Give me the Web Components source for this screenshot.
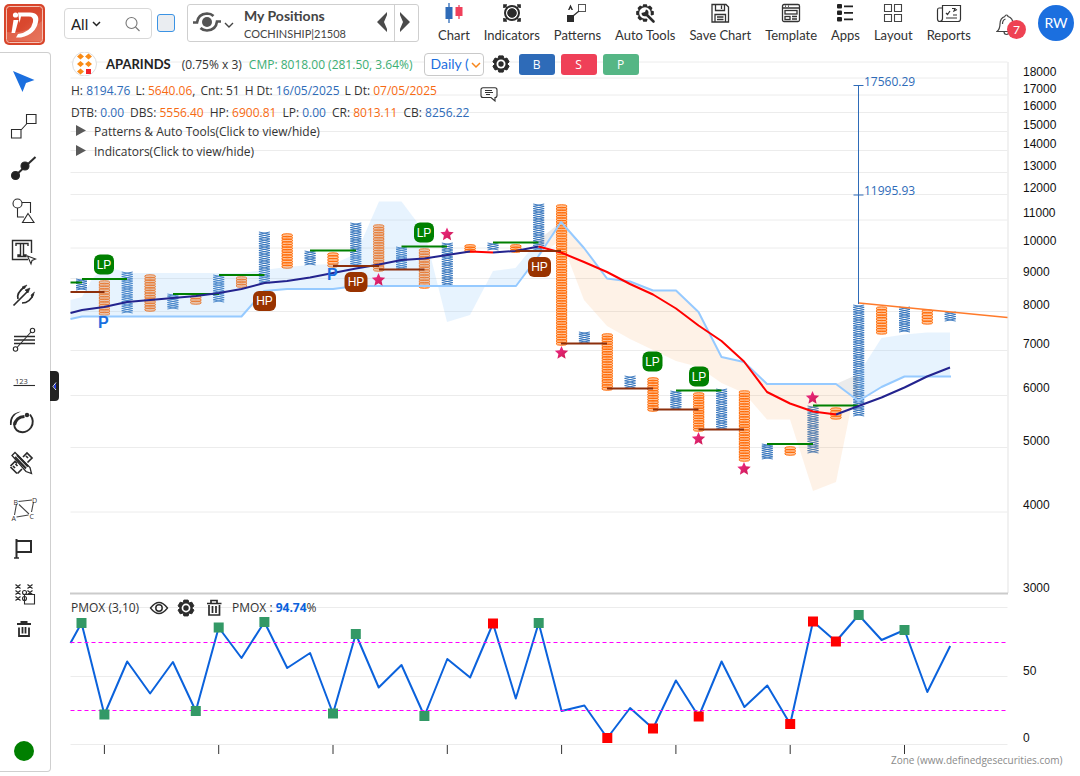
<!DOCTYPE html>
<html lang="en">
<head>
<meta charset="utf-8">
<title>APARINDS - Point &amp; Figure</title>
<style>
body{margin:0;background:#fff;color:#333;font-family:Lato,"Open Sans",sans-serif;font-size:13px}
</style>
</head>
<body>
<app-shell></app-shell>
<script>
function define(name, html){
  const t=document.createElement('template');
  t.innerHTML=html;
  customElements.define(name, class extends HTMLElement{
    constructor(){super();this.attachShadow({mode:'open'}).append(t.content.cloneNode(true));}
  });
}
/* toothed wheel centred on 0,0 */
function gear(n,ro,ri){
  let p=[];
  for(let k=0;k<n;k++){
    const a=k*2*Math.PI/n, w=Math.PI/n;
    [[-.95,ri],[-.5,ro],[.5,ro],[.95,ri]].forEach(([f,r])=>p.push((r*Math.sin(a+f*w)).toFixed(2)+','+(-r*Math.cos(a+f*w)).toFixed(2)));
  }
  return p.join(' ');
}
const settings=`<svg width="18" height="18" viewBox="-9 -9 18 18"><polygon points="${gear(6,8.4,6.2)}" fill="#2b2b2b" stroke="#2b2b2b" stroke-linejoin="round"/><circle r="4.500" fill="#fff"/><circle r="2.700" fill="#2b2b2b"/></svg>`;

define('menu-item',`
<style>
:host{display:block}
button{all:unset;display:flex;flex-direction:column;align-items:center;gap:2px;cursor:pointer;font-size:13px;line-height:18px;color:#333;white-space:nowrap}
</style>
<button><slot name="icon"></slot><slot></slot></button>`);

define('top-bar',`
<style>
:host{display:flex;align-items:flex-start;height:52px;box-sizing:border-box;padding:4px 6px 0 4px}
svg{display:block}
.logo{margin-right:19px}
.search{display:flex;align-items:center;box-sizing:border-box;width:88px;height:31px;margin-top:4px;border:1px solid #d8d8d8;border-radius:4px;position:relative}
select{appearance:none;border:0;background:none;font:15px/20px Lato,sans-serif;color:#222;padding:0 0 0 6px;width:38px}
.search input{all:unset;width:12px;height:20px}
.search .chev{position:absolute;left:27px;top:11px}
.tick{appearance:none;width:18px;height:18px;margin:10px 12px 0 5px;border:1px solid #3b93e4;border-radius:3px;background:#eaedf1}
.pos{display:flex;box-sizing:border-box;width:232px;height:38px;border:1px solid #cfcfcf;border-radius:3px;margin-right:19px}
.pick{display:flex;align-items:center;width:56px;box-sizing:border-box;padding:0 0 2px 5px}
.name{flex:1;white-space:nowrap}
.name b{display:block;font-size:14px;line-height:18px;margin-top:2px;color:#444}
.name span{display:block;font-size:11px;line-height:17px;color:#444}
.step{all:unset;width:25px;display:flex;align-items:center;justify-content:center;cursor:pointer;margin-bottom:2px}
.step+.step{border-left:1px solid #cfcfcf;margin-bottom:0;padding-bottom:2px;width:24px;box-sizing:border-box;justify-content:flex-start;padding-left:4px}
nav{flex:1;display:flex;justify-content:space-between;margin-top:-4px}
nav svg{height:24px;width:26px}
.bell{all:unset;position:relative;margin:4px 12px 0 25px;width:30px;height:32px}
.bell i{position:absolute;right:0;top:12px;width:19px;height:19px;border-radius:50%;background:#ee4253;color:#fff;font:12px/19px Lato,sans-serif;text-align:center}
.me{all:unset;width:36px;height:36px;border-radius:50%;background:#1b6fdf;color:#fff;font-size:14px;line-height:36px;text-align:center;margin-top:1px}
</style>
<svg class="logo" width="41" height="41" viewBox="0 0 41 41" role="img" aria-label="Definedge">
 <defs><linearGradient id="lg" x1="0" y1="0" x2="1" y2="1"><stop offset="0" stop-color="#d94428"/><stop offset=".5" stop-color="#d9482f"/><stop offset="1" stop-color="#e4694f"/></linearGradient></defs>
 <rect width="41" height="41" rx="5" fill="#d8452b"/><rect x="2.5" y="2.5" width="36" height="36" rx="3" fill="url(#lg)" stroke="#f3c1b4"/>
 <path d="M3 28Q24 30 38 17V37H3Z" fill="#ec8872" opacity=".45"/>
 <circle cx="11.5" cy="11" r="2.6" fill="#fff"/><path d="M9.5 16H14.5L11 29H7.500Z" fill="#fff"/>
 <path d="M14 8.500H26Q36 9 34 18Q32 30 17 33.500H12L14 30Q27 28 29 18Q30 12 24 12.500H17L15.500 19Z" fill="#fff"/>
</svg>
<div class="search"><select aria-label="Segment"><option>All</option></select><input aria-label="Search symbol">
 <svg class="chev" width="9" height="8" viewBox="0 0 9 8"><path d="M1 2l3.500 3.500L8 2" fill="none" stroke="#222" stroke-width="1.500"/></svg>
 <svg width="16" height="16" viewBox="0 0 16 16" style="margin-left:10px"><circle cx="6.500" cy="7" r="5.500" fill="none" stroke="#777" stroke-width="1.100"/><path d="M10.500 11l4 4" stroke="#777" stroke-width="1.100"/></svg>
</div>
<input class="tick" type="checkbox" aria-label="Compare">
<div class="pos">
 <div class="pick">
  <svg width="28" height="24" viewBox="0 0 28 24" fill="none" stroke="#555"><circle cx="14" cy="12" r="5" fill="#555" stroke="none"/><path d="M0 12.500H4Q5 4 14 3.500Q18 3.500 20.500 6M28 11.500H24Q23 20 14 20.500Q10 20.500 7.500 18" stroke-width="2.600"/></svg>
  <svg width="10" height="8" viewBox="0 0 10 8" style="margin:6px 0 0 3px"><path d="M1 2l4 4 4-4" fill="none" stroke="#444" stroke-width="1.400"/></svg>
 </div>
 <div class="name"><b>My Positions</b><span>COCHINSHIP|21508</span></div>
 <button class="step" aria-label="Previous"><svg width="12" height="20" viewBox="0 0 12 20"><path d="M11 0L1 10L11 20V17L8 10L11 3Z" fill="#4a4a4a"/></svg></button>
 <button class="step" aria-label="Next"><svg width="12" height="20" viewBox="0 0 12 20"><path d="M1 0L11 10L1 20V17L4 10L1 3Z" fill="#4a4a4a"/></svg></button>
</div>
<nav>
 <menu-item><svg slot="icon" viewBox="0 0 26 24"><path d="M8 3V23" stroke="#2e6bb8" stroke-width="1.300"/><rect x="4.500" y="7" width="7" height="12" fill="#2e6bb8"/><path d="M18 5V19" stroke="#f0405b" stroke-width="1.300"/><rect x="14.500" y="7" width="7" height="9" fill="#f0405b"/></svg>Chart</menu-item>
 <menu-item><svg slot="icon" viewBox="0 -1 26 24" fill="none" stroke="#2b2b2b"><circle cx="13" cy="12" r="7" stroke-width="2"/><circle cx="13" cy="12" r="4.300" fill="#2b2b2b"/><path d="M5 7V4H8M18 4H21V7M5 17V20H8M18 20H21V17M5 4l3 3M21 4l-3 3M5 20l3-3M21 20l-3-3" stroke-width="1.700"/></svg>Indicators</menu-item>
 <menu-item><svg slot="icon" viewBox="0 -1 26 24"><path d="M4 9L6.500 3.500L9 9H7.500L6.500 7L5.500 9Z" fill="#2b2b2b"/><rect x="3" y="14" width="7" height="7" fill="#2b2b2b"/><rect x="14.500" y="3.500" width="7" height="7" fill="none" stroke="#555"/><path d="M9 15l6-5" stroke="#2b2b2b" stroke-width="1.200"/></svg>Patterns</menu-item>
 <menu-item><svg slot="icon" viewBox="-13 -13 26 24"><polygon points="${gear(8,9,7)}" fill="#2b2b2b"/><circle r="5.800" fill="#fff"/><path d="M1 1L8 8" stroke="#fff" stroke-width="5.500"/><path d="M1 1L8.500 8.500" stroke="#2b2b2b" stroke-width="2.600" stroke-linecap="round"/><path d="M-3.500 0A3.500 3.500 0 1 0 1-3.500L0-1Z" fill="#2b2b2b"/></svg>Auto Tools</menu-item>
 <menu-item><svg slot="icon" viewBox="0 -1 26 24" fill="none" stroke="#333" stroke-width="1.300"><path d="M5 3.500H19L21.500 6V21H5ZM8.500 3.500V9.500H17.500V3.500M14.500 4.500V8M8 21V13.500H18.500V21M10 16H16.500M10 18.500H16.500"/></svg>Save Chart</menu-item>
 <menu-item><svg slot="icon" viewBox="0 -1 26 24" fill="none" stroke="#333" stroke-width="1.300"><rect x="4.500" y="3.500" width="17" height="17" rx="1.500"/><path d="M4.500 7H21.500M7 5.200H8M10 5.200H11"/><rect x="7" y="9.500" width="12" height="3.500"/><rect x="7" y="15.500" width="5" height="3"/><path d="M14 15.500H19M14 18H19"/></svg>Template</menu-item>
 <menu-item><svg slot="icon" viewBox="0 -1 26 24" fill="#222"><rect x="5" y="3" width="5" height="4.500" rx="1"/><rect x="5" y="9.500" width="5" height="4.500" rx="1"/><rect x="5" y="16" width="5" height="4.500" rx="1"/><path d="M12 5.300H21M12 11.800H21M12 18.300H21" stroke="#222" stroke-width="1.800"/></svg>Apps</menu-item>
 <menu-item><svg slot="icon" viewBox="0 -1 26 24" fill="none" stroke="#444" stroke-width="1.100"><path d="M4.500 3.500H11.500V10.500H4.500ZM14.500 3.500H21.500V10.500H14.500ZM4.500 13.500H11.500V20.500H4.500ZM14.500 13.500H21.500V20.500H14.500Z"/></svg>Layout</menu-item>
 <menu-item><svg slot="icon" viewBox="0 -1 26 24" fill="none" stroke="#333" stroke-width="1.200"><path d="M6 7H3Q1.500 7 1.500 9V18Q1.500 20.500 4 20.500H22Q24.500 20.500 24.500 18V4.500H6.500V17.500Q6.500 20 4 20.500"/><path d="M10 12l1.500 1.500L14 10M10 17H21M17 14H21M16 7.500H19L18 10L21 8.500"/></svg>Reports</menu-item>
</nav>
<button class="bell" aria-label="Notifications"><svg width="22" height="24" viewBox="0 0 22 24" fill="none" stroke="#444" stroke-width="1.200"><path d="M9 4.500A1.500 1.500 0 0 1 12 4.500Q17 6 17 12Q17 17 20 19.500H1Q4 17 4 12Q4 6 9 4.500M8 19.500Q8 22.500 10.500 22.500T13 19.500M6.500 12Q6.500 8 9.500 7"/></svg><i>7</i></button>
<button class="me">RW</button>`);

/* Artwork of the drawing tools; the strip is 42 units per tool, starting at y=63 */
const tools=[
['Cursor','<path d="M13 71L34.500 80L26 83L22.500 92Z" fill="#1b6fdf" stroke="none"/>'],
['Line','<path d="M11.500 129.500H21V138H11.500ZM26.500 114.500H36V123.500H26.500ZM21 130L27 123.500"/>'],
['Trend','<path d="M15 176L35.500 157" stroke-width="2"/><circle cx="15.500" cy="175.500" r="4" fill="#222"/><circle cx="25" cy="166" r="4" fill="#222"/>'],
['Shapes','<path d="M22 202.500H30.500V213M17.500 208V217H24M28 213.500L34 222.500H22.500Z"/><circle cx="17.500" cy="203.500" r="4.500"/>'],
['Text','<path d="M31.500 253V240.500H12.500V259.500H28M16 246V243.500H28V246M20.500 244V255H18V256.500H26V255H23.500V244" stroke-width="1.400"/><path d="M27.500 256L35.500 259L32 260.500L31 264Z"/>'],
['Pitchfork','<path d="M13.500 305.500L28 291M18 299Q16 293 25 286.500M22 303Q30 303 33.500 294" stroke-width="1.700"/><path d="M22 287L27 285L24 289ZM25 290L30 288L28 293ZM31 295L34.500 292L32 298Z" fill="#2b2b2b" stroke-width=".6"/>'],
['Fibonacci','<path d="M14 336.500H35M14 340H35M14 343.500H35" stroke-width="1.300"/><path d="M17 347.500L31 332"/><circle cx="32.500" cy="330.500" r="2.200" fill="#fff"/><circle cx="15.500" cy="349" r="2.200" fill="#fff"/>'],
['Count','<path d="M13.500 385.500H35"/><text x="15" y="384" font-size="7.500">123</text>'],
['Cycle','<path d="M10 425Q9 413 21 411.500Q11 415 11.500 425Z" fill="#2b2b2b" stroke="none"/><path d="M30 414.500Q35 421 31 427.500Q26 434 19 431.500Q13 429 14.500 422" stroke-width="1.900"/><path d="M14.500 425Q16 417 24.500 416.500" stroke-width="3"/><circle cx="27" cy="415" r="2.200" fill="#2b2b2b" stroke="none"/>'],
['Measure','<path d="M10.500 466L15 461.500L17 463.500M23 457L27 453L32 458L27.500 462.500M17.500 473.500L22 469M10.500 467L17 473.500M13 466l2 2M15.500 464l2 2M26 456l2 2" stroke-width="1.700"/><path d="M12 455.500L15 452.500L30 467.500L31.500 473.500L26 471.500Z" stroke-width="1.300"/><path d="M17 455L28 466.500M15 457L26 468.500" stroke-width="2"/>'],
['Harmonic','<path d="M18.500 501.500L32 500M16.500 504L14.500 515M16.500 517L28.500 515M19 504.500L29 514M33.500 502L31.500 512" stroke="#444"/><g font-size="7"><text x="13.500" y="505">B</text><text x="32" y="503">D</text><text x="11.500" y="521">A</text><text x="29.500" y="518.500">C</text></g>'],
['Flag','<path d="M16.500 539V558M16.500 541H31V552H16.500" stroke-width="2"/><path d="M14 558H19" stroke-width="1.500"/>'],
['Pattern','<path d="M15.500 584.500l5 4m0-4l-5 4M27.500 584.500l5 4m0-4l-5 4M15.500 590.500l5 4m0-4l-5 4M27.500 590.500l5 4m0-4l-5 4M15.500 596.500l5 4m0-4l-5 4" stroke-width="1.200"/><circle cx="24.500" cy="592.500" r="2"/><circle cx="24.500" cy="598.500" r="2"/><path d="M24.500 594.500H34.500V604H24.500Z"/>'],
['Delete','<path d="M17 624H31M21.500 623.500V622H26.500V623.500" stroke-width="2"/><path d="M19 627.500V636H29V627.500M22.500 627V633.500M25.500 627V633.500" stroke-width="1.800"/>']
];
define('tool-strip',`
<style>
:host{display:flex;flex-direction:column;position:relative;box-sizing:border-box;border:1px solid #cfcfcf;border-left:0;border-radius:0 4px 4px 0;padding:10px 0;margin-bottom:4px}
button{all:unset;display:block;height:42px;cursor:pointer}
svg{display:block;width:50px;height:42px}
.live{width:20px;height:20px;border-radius:50%;background:#007f00;margin:auto 0 0 14px}
.grip{position:absolute;left:100%;top:318px;width:9px;height:30px;border-radius:0 4px 4px 0;background:#222}
.grip svg{width:9px;height:30px}
</style>
${tools.map(([n,a],i)=>`<button aria-label="${n}"><svg viewBox="0 ${63+42*i} 50 42" fill="none" stroke="#2b2b2b" stroke-width="1.100">${a.replace(/<text/g,'<text stroke="none" fill="#333" font-family="Open Sans,sans-serif"')}</svg></button>`).join('')}
<div class="live"></div>
<button class="grip" aria-label="Collapse"><svg viewBox="0 0 9 30"><path d="M6 11.500L3 15.500L6 19" fill="none" stroke="#dfe4ff"/><path d="M6 12.500L4 15.500L6 18Z" fill="#2038ff"/></svg></button>`);

define('chart-info',`
<style>
:host{display:block;padding:0 0 0 20px;white-space:nowrap;color:#333;font-family:"Open Sans",sans-serif;font-size:12px}
svg{display:block}
.row{display:flex;align-items:center;height:24px}
.r2{height:28px;gap:5px}
.r3{height:16px;gap:6px;margin-bottom:1px}
.sym{font-family:Lato,sans-serif;font-size:13px;margin:0 11px 0 9px;color:#222}
.cmp{color:#3cae74;margin-left:7px}
label{position:relative;margin:0 8px 0 11px}
label svg{position:absolute;right:3px;top:8px}
select{appearance:none;display:block;box-sizing:border-box;width:60px;height:23px;border:1px solid #c9c9c9;border-radius:4px;background:#fff;color:#1b6fdf;font:14px/20px Lato,sans-serif;padding:0 0 0 6px}
.t{all:unset;width:36px;height:21px;border-radius:3px;text-align:center;color:#fff;font:12px/21px "Open Sans",sans-serif;margin-left:6px;cursor:pointer}
.b{background:#2e6bb8;margin-left:9px}.s{background:#ef4058}.p{background:#55b685}
.b1{color:#2e6bb8}.o{color:#f76a12}
summary{list-style:none;display:flex;align-items:center;gap:8px;height:20px;padding-left:4px;cursor:pointer}
.note{all:unset;margin:8px 0 0 38px}
</style>
<div class="row">
 <svg width="26" height="24" viewBox="0 0 26 24"><circle cx="13.500" cy="12" r="12" fill="#fff" stroke="#ddd"/><path d="M9.500 1.500l3.500 3-3.500 3-3.500-3ZM17.500 1.500l3.500 3-3.500 3-3.500-3ZM9.500 9l3.500 3-3.500 3-3.500-3ZM17.500 9l3.500 3-3.500 3-3.500-3ZM9.500 16.500l3.500 3-3.500 3-3.500-3Z" fill="#f98b16"/><rect x="15" y="17" width="5" height="5" fill="#f3222b"/></svg>
 <b class="sym">APARINDS</b><span>(0.75% x 3)</span><span class="cmp">CMP: 8018.00 (281.50, 3.64%)</span>
 <label><select aria-label="Interval"><option>Daily (</option></select><svg width="10" height="8" viewBox="0 0 10 8"><path d="M1 2l4 4 4-4" fill="none" stroke="#f7861b" stroke-width="1.500"/></svg></label>
 ${settings}
 <button class="t b">B</button><button class="t s">S</button><button class="t p">P</button>
</div>
<div class="row r2">
 <span>H: <span class="b1">8194.76</span></span><span>L: <span class="o">5640.06</span>,</span><span>Cnt: 51</span><span>H Dt: <span class="b1">16/05/2025</span></span><span>L Dt: <span class="o">07/05/2025</span></span>
 <button class="note" aria-label="Notes"><svg width="18" height="15" viewBox="0 0 18 15" fill="none" stroke="#333" stroke-width="1.100"><path d="M3 .800H15Q17 .800 17 3V8.500Q17 10.500 15 10.500V14L11 10.500H3Q1 10.500 1 8.500V3Q1 .800 3 .800ZM5 3.500H12M5 5.500H13M6 7.500H10"/></svg></button>
</div>
<div class="row r3">
 <span>DTB: <span class="b1">0.00</span></span><span>DBS: <span class="o">5556.40</span></span><span>HP: <span class="o">6900.81</span></span><span>LP: <span class="b1">0.00</span></span><span>CR: <span class="o">8013.11</span></span><span>CB: <span class="b1">8256.22</span></span>
</div>
<details><summary><svg width="11" height="12" viewBox="0 0 11 12"><path d="M1 0L11 5.500L1 11Z" fill="#5a5a5a"/></svg>Patterns &amp; Auto Tools(Click to view/hide)</summary></details>
<details><summary><svg width="11" height="12" viewBox="0 0 11 12"><path d="M1 0L11 5.500L1 11Z" fill="#5a5a5a"/></svg>Indicators(Click to view/hide)</summary></details>`);

/* ---- price pane and oscillator ---- */
const X=i=>+(81.5+22.86*i).toFixed(1);
const cols=[[279,290],[281,315],[272,313],[275,311],[294,309],[296,304],[275,302],[277,287],[232,283],[234,268],[251,265],[253,267],[223,266],[225,271],[247,269],[249,288],[243,285],[245,252],[243,250],[245,252],[204,250],[205,345],[332,343],[334,390],[376,388],[378,411],[391,409],[393,431],[389,429],[391,461],[444,459],[447,455],[406,453],[408,419],[305,416],[307,334],[307,332],[310,324],[312,321]];
function column([a,b],i){
  const x=X(i), o=i%2, n=Math.max(2,Math.round((b-a)/(o?2.6:2.3))), h=(b-a)/n;
  let d='';
  for(let k=0;k<n;k++){
    const t=(a+k*h).toFixed(1), m=h.toFixed(1);
    d+= o ? `M${x-5.5} ${(a+(k+.5)*h).toFixed(1)}a5.5 1.6 0 1 1 11 0a5.5 1.6 0 1 1 -11 0` : `M${x-5.5} ${t}l11 ${m}m0 -${m}l-11 ${m}`;
  }
  return (o?`<rect x="${x-5.5}" y="${a}" width="11" height="${b-a}" rx="2" fill="#ffc49a"/>`:'')+`<path d="${d}" stroke="${o?'#ff6c08':'#2e6fba'}" stroke-width="${o?1:.9}"/>`;
}
const seg=(list,c)=>`<path d="${list.map(([a,b,y])=>`M${a} ${y}H${b}`).join('')}" stroke="${c}" stroke-width="2"/>`;
const line=(s,c,w=2)=>`<polyline points="${s}" stroke="${c}" stroke-width="${w}" stroke-linejoin="round"/>`;
const badge=([t,x,y])=>{const w=t=='LP'?20:23;return `<rect x="${x-w/2}" y="${y-10}" width="${w}" height="20" rx="6" fill="${t=='LP'?'#008000':'#993300'}"/><text x="${x}" y="${y+4}" text-anchor="middle" fill="#fff" font-family="Liberation Sans,sans-serif" font-size="12">${t}</text>`;};
const star=([x,y])=>{let p=[];for(let k=0;k<10;k++){const r=k%2?3.3:7,a=k*Math.PI/5;p.push((x+r*Math.sin(a)).toFixed(1)+','+(y-r*Math.cos(a)).toFixed(1));}return `<polygon points="${p.join(' ')}" fill="url(#st)"/>`;};
const osc=[623,714.5,661.5,693.5,662,711,627.5,658,622,668,653,713.5,634,687.5,665,716,659,677.5,623.5,698.5,623,711,705.5,738,708,728.5,680.5,716.5,661.5,707,685.5,724,621.5,641.5,615,640,630,692,646];
const mark=(l,c)=>l.map(i=>`<rect x="${(X(i)-5).toFixed(1)}" y="${osc[i]-5}" width="10" height="10" fill="${c}"/>`).join('');
const scale=[[18000,72],[17000,89],[16000,106],[15000,125],[14000,144],[13000,166],[12000,188],[11000,213],[10000,241],[9000,272],[8000,305],[7000,344],[6000,388],[5000,441],[4000,505],[3000,588],[50,671],[0,738]];

define('price-chart',`
<style>
:host{display:block}
svg{display:block;width:100%;height:auto}
</style>
<svg viewBox="51 52 1029 724" fill="none" role="img" aria-label="APARINDS point and figure chart with PMOX">
<defs><linearGradient id="st" x1="0" y1="0" x2="1" y2="1"><stop offset="0" stop-color="#f52c8c"/><stop offset="1" stop-color="#c8194f"/></linearGradient></defs>
<g stroke="#ececec">${[62,78,95,112.5,131.5,150.5,172.5,194.5,220,248,278.5,311.5,350.5,395.5,447.5,512,607.5,676.5,744.5].map(y=>`<path d="M70.500 ${y}H1007.500"/>`).join('')}<path d="M1008 62V593" stroke-width="1.500"/></g>
<path d="M70 593.500H1008" stroke="#cbcbcb" stroke-width="2"/>
${cols.map(column).join('')}
<path fill="#8cc6fa" fill-opacity=".21" d="M70.500 300L82 297L92 279L104 268L119 270L127 273H241.500L264 270L287 267L310 265L333 264L356 254L379 201.500H401.500L424.500 232L447 322L470 315L493 271L515.500 268L538.500 240L538.500 256L515.500 286H356L333 289H287L264 291L241.500 316.500H82L70.500 319Z"/>
<path fill="#999" fill-opacity=".2" d="M538.500 240L561 222L538.500 256ZM836 384L858.500 374V401Z"/>
<path fill="#fba860" fill-opacity=".15" d="M538.500 256L561 222L584 248L607 278.500L630 281.500L653 290.500H676L698.500 312L721.500 357L744 362L767 384H836L853 398L836 482L813 491L790 419.500H767L744 393L721.500 383L698.500 367L676 361L653 350L630 339L607 326L584 300L561 240Z"/>
<path fill="#8cc6fa" fill-opacity=".21" d="M858.500 374L881.500 338L904.500 334.500L927 332.500H950V376.500H904.500L881.500 387L858.500 401Z"/>
${line('70.500,319 82,316.500 241.500,316.500 264,291 287,289 333,289 356,286 516,286 538.500,256 561,222 584,248 607,278.500 630,281.500 653,290.500 676,290.500 698.500,312 721.500,357 744,362 767,384 836,384 858.500,401 881.500,387 904.500,376.500 951,376.500','#96caff')}
${seg([[70.5,82,282.5],[82,127,279],[173,219,294],[219,264.5,275],[310,356,250.5],[401.5,447,246.5],[493,538.5,242.5],[676,721.5,390.5],[767,813,444],[813,858.5,405.5]],'#008000')}
${line('70.500,313 82,310 104,307 127,302 150,300 173,298 196,296 219,293 241.500,289 264.500,283 287,281 310,277.500 333,273 356,268.500 379,264.500 401.500,260 424.500,258.500 447,255 470,251.500','#23238e')}
${line('493,252.500 515.500,251 538.500,246.500','#23238e')}
${line('836,414.500 858.500,406 881.500,397.500 904.500,387.500 927,376.500 950,367.500','#23238e')}
${line('470,251.500 493,252.500','#f00')}
${line('538.500,246.500 561,252.500 584,262 607,272 630,284 653,294.500 676,308.500 698.500,325.500 721.500,341 744,361.500 767,392 790,403.500 813,411.500 836,414.500','#f00')}
${seg([[70.5,104.5,292],[333,379,266],[379,424.5,269.5],[515.5,561,251],[561,607,343.5],[607,653,388.5],[653,698.5,409.5],[698.5,744,429.5]],'#8c2f0c')}
<path d="M858.500 304V85.500M853.500 85.500H863.500M853.500 195H863.500" stroke="#2e6bb8"/>
<path d="M859 303L1007.500 317.500" stroke="#ff7a2a" stroke-width="1.300"/>
<g fill="#2e6bb8" font-family="Open Sans,sans-serif" font-size="12"><text x="864" y="86">17560.29</text><text x="864" y="195">11995.93</text></g>
<g fill="#1b6fdf" font-family="Liberation Sans,sans-serif" font-size="16" font-weight="700"><text x="98" y="328">P</text><text x="327" y="280">P</text></g>
${[['LP',104,264.5],['LP',424,232.5],['LP',652.5,361.5],['LP',699,376.5],['HP',264.5,301],['HP',356,282],['HP',539.5,267]].map(badge).join('')}
${[[447,234.5],[378.5,280],[561.5,353],[698.5,439],[744,469],[812.5,398]].map(star).join('')}
${line('70.500,643 '+osc.map((y,i)=>X(i)+','+y).join(' '),'#0b62dc')}
<path d="M70.500 642.500H1007M70.500 710.500H1007" stroke="#f0f" stroke-dasharray="4 3"/>
${mark([0,1,5,6,8,11,12,15,20,34,36],'#339966')}${mark([18,23,25,27,31,32,33],'#ff0000')}
<path d="${[1,6,11,16,21,26,31,36].map(i=>`M${X(i)} 745V754`).join('')}" stroke="#333"/>
<g fill="#111" font-family="Liberation Sans,sans-serif" font-size="12">${scale.map(([v,y])=>`<text x="1023" y="${y+4}">${v}</text>`).join('')}</g>
<text x="891" y="764" fill="#8a8a8a" font-family="Open Sans,sans-serif" font-size="10">Zone (www.definedgesecurities.com)</text>
<g fill="#333" font-family="Open Sans,sans-serif" font-size="12"><text x="71" y="612">PMOX (3,10)</text><text x="232" y="612">PMOX : <tspan fill="#0b62dc" font-weight="700">94.74</tspan>%</text></g>
<g stroke="#2b2b2b"><path d="M150.500 608Q159 597 167.500 608Q159 619 150.500 608Z" stroke-width="1.300"/><circle cx="159" cy="608" r="3.200" stroke-width="1.500"/></g>
<g transform="translate(186 608)"><polygon points="${gear(6,8.2,6)}" fill="#2b2b2b" stroke="#2b2b2b" stroke-linejoin="round"/><circle r="4.400" fill="#fff"/><circle r="2.700" fill="#2b2b2b"/></g>
<path d="M207 603.500H221.500M211 603V600.500H217V603M209 605V615H219.500V605M212.500 606V613M216 606V613" stroke="#2b2b2b" stroke-width="1.700"/>
</svg>`);

define('app-shell',`
<style>
:host{display:grid;grid-template:52px auto / 51px 1fr}
top-bar{grid-column:1 / 3}
tool-strip{grid-area:2 / 1;z-index:1}
price-chart{grid-area:2 / 2}
chart-info{grid-area:2 / 2;align-self:start;justify-self:start;z-index:1}
</style>
<top-bar></top-bar><tool-strip></tool-strip><price-chart></price-chart><chart-info></chart-info>`);
</script>
</body>
</html>
